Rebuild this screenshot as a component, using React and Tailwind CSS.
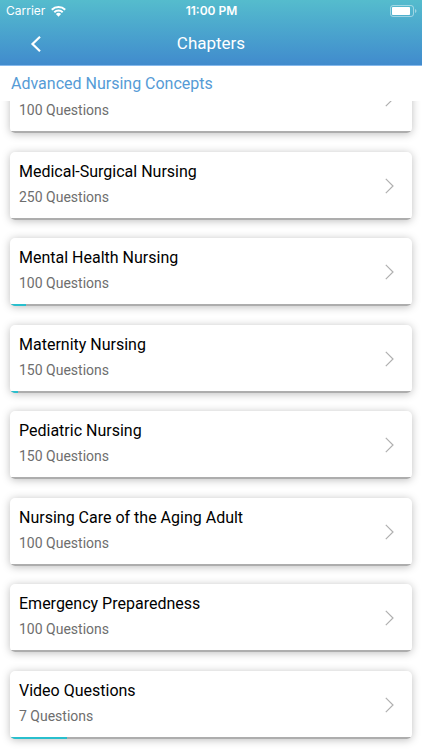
const chapters = [
  { id: 1, title: "", count: 100, done: 0 },
  { id: 2, title: "Medical-Surgical Nursing", count: 250, done: 0 },
  { id: 3, title: "Mental Health Nursing", count: 100, done: 4 },
  { id: 4, title: "Maternity Nursing", count: 150, done: 3 },
  { id: 5, title: "Pediatric Nursing", count: 150, done: 0 },
  { id: 6, title: "Nursing Care of the Aging Adult", count: 100, done: 0 },
  { id: 7, title: "Emergency Preparedness", count: 100, done: 0 },
  { id: 8, title: "Video Questions", count: 7, done: 1 },
];

function StatusBar() {
  return (
    <div className="grid h-[22px] grid-cols-3 items-center pr-[5px] pl-[6px] text-xs text-white">
      <div className="flex items-center gap-[6px] font-[Inter,sans-serif]">
        Carrier
        <svg className="h-[11px] w-[15px]" viewBox="0 0 15 11" aria-hidden="true">
          <path d="M7.5 10.700 4.900 8.100a3.700 3.700 0 0 1 5.200 0Z" fill="white" />
          <path d="M3.300 6.300a6 6 0 0 1 8.400 0M.8 3.800a9.500 9.500 0 0 1 13.400 0" fill="none" stroke="white" strokeWidth="2" />
        </svg>
      </div>
      <div className="text-center font-[Inter,sans-serif] font-semibold">11:00 PM</div>
      <svg className="h-3 w-[27px] justify-self-end" viewBox="0 0 27 12" aria-hidden="true">
        <rect x="0.5" y="0.5" width="23" height="11" rx="2.5" fill="none" stroke="white" strokeOpacity="0.45" />
        <rect x="2" y="2" width="18" height="8" rx="0.8" fill="white" />
        <path d="M25 4v4q1.500-.6 1.500-2T25 4Z" fill="white" fillOpacity="0.45" />
      </svg>
    </div>
  );
}

function ChapterCard({ title, count, done }) {
  return (
    <li>
      <a
        href="#chapter"
        className="flex h-[68px] flex-col overflow-hidden rounded-[5px] bg-white shadow-[0_1px_8px_rgba(0,0,0,0.26)]"
      >
        <div className="flex flex-1 items-center justify-between pt-[2px] pr-[18px] pl-[9px]">
          <div className="self-start pt-[5px]">
            <div className="h-[26px] text-base leading-[26px] text-black">{title}</div>
            <p className="text-sm leading-6 text-[#6e6e6e]">{count} Questions</p>
          </div>
          <svg className="h-4 w-[9px]" viewBox="0 0 9 16" fill="none" stroke="#b0b0b0" strokeWidth="1.200" aria-hidden="true">
            <path d="m.8 .8 7.200 7.200-7.200 7.200" />
          </svg>
        </div>
        <div className="h-[2px] bg-[#adadad]">
          <div className="h-full bg-[#29bfcd]" style={{ width: `${(done / count) * 100}%` }} />
        </div>
      </a>
    </li>
  );
}

export default function App() {
  return (
    <div className="flex h-screen flex-col overflow-hidden bg-white font-[Roboto,sans-serif]">
      <header className="h-[66px] shrink-0 border-b border-[#86b9ec] bg-linear-to-b from-[#55bccd] to-[#418bcd]">
        <StatusBar />
        <div className="grid h-[43px] grid-cols-3 items-center">
          <button type="button" aria-label="Back" className="ml-[30px] w-3">
            <svg className="h-4 w-3" viewBox="0 0 12 16" fill="none" stroke="white" strokeWidth="2.200" aria-hidden="true">
              <path d="M10 .8 2.500 8l7.500 7.200" />
            </svg>
          </button>
          <h1 className="text-center text-[17px] text-white">Chapters</h1>
        </div>
      </header>
      <h2 className="h-[35px] shrink-0 px-[11px] text-base leading-[35px] text-[#559bd6]">
        Advanced Nursing Concepts
      </h2>
      <main className="flex min-h-0 flex-1 flex-col overflow-hidden">
        <ul className="-mt-9 flex flex-1 flex-col justify-between px-[10px] pb-[11px]">
          {chapters.map((chapter) => (
            <ChapterCard key={chapter.id} {...chapter} />
          ))}
        </ul>
      </main>
    </div>
  );
}
